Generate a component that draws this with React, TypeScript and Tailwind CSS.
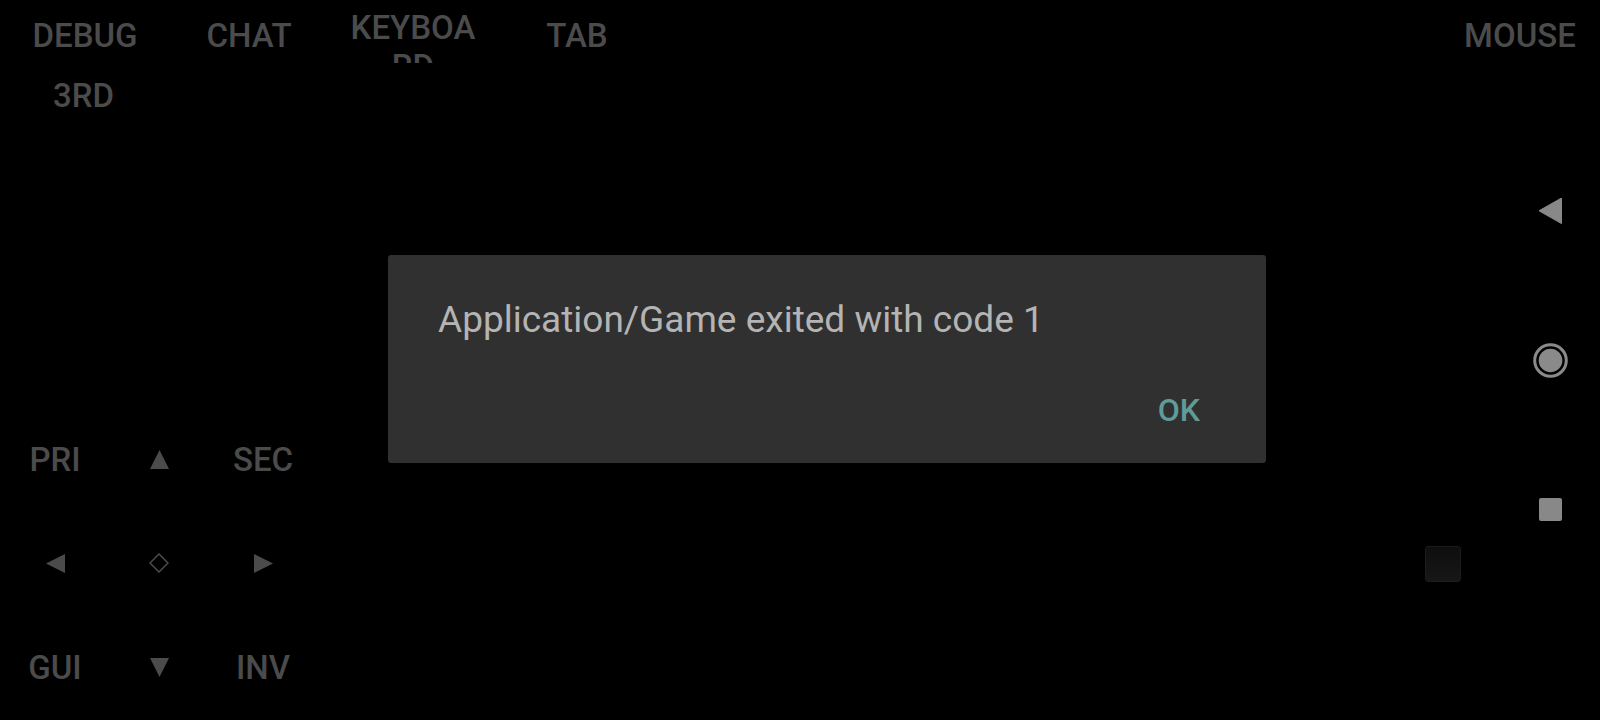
import React from 'react';

const label = 'text-[33px] font-medium text-[#4b4b4b] leading-[39px] whitespace-nowrap';

interface ButtonProps {
  text: string;
  className?: string;
}

// Custom control drawn on the game canvas (top row)
const TopButton: React.FC<ButtonProps> = ({ text, className = 'pt-[16px]' }) => (
  <div className={`w-[130px] h-[63px] overflow-hidden text-center ${className}`}>
    <span className={label}>{text}</span>
  </div>
);

const Arrow: React.FC<{ dir: 'up' | 'down' | 'left' | 'right' }> = ({ dir }) => {
  const points = {
    up: '9.5,0 19,19 0,19',
    down: '0,0 19,0 9.5,19',
    left: '0,9.5 19,0 19,19',
    right: '0,0 19,9.5 0,19',
  }[dir];
  return (
    <svg width="19" height="19" viewBox="0 0 19 19" className="block">
      <polygon points={points} fill="#4b4b4b" />
    </svg>
  );
};

const Cell: React.FC<{ children: React.ReactNode }> = ({ children }) => (
  <div className="flex h-[104px] items-center justify-center">{children}</div>
);

const App: React.FC = () => {
  return (
    <div className="relative h-[720px] w-[1600px] overflow-hidden bg-black font-[Roboto,sans-serif]">
      <div className="flex h-full flex-col">
        {/* top controls */}
        <div className="flex items-start pl-[20px]">
          <div className="flex flex-col">
            <TopButton text="DEBUG" />
            <div className="mt-[13px] w-[130px] pr-[3px] text-center">
              <span className={label}>3RD</span>
            </div>
          </div>
          <div className="ml-[34px]">
            <TopButton text="CHAT" />
          </div>
          <div className="ml-[34px]">
            <div className="h-[63px] w-[130px] overflow-hidden break-all pt-[8px] text-center">
              <span className="text-[33px] font-medium leading-[39px] text-[#4b4b4b]">KEYBOARD</span>
            </div>
          </div>
          <div className="ml-[34px]">
            <TopButton text="TAB" />
          </div>
          <div className="ml-auto mr-[15px]">
            <TopButton text="MOUSE" />
          </div>
        </div>

        {/* bottom controls */}
        <div className="mt-auto flex items-end justify-between">
          <div className="ml-[3px] mb-[1px] grid grid-cols-[104px_104px_104px]">
            <Cell><span className={label}>PRI</span></Cell>
            <Cell><Arrow dir="up" /></Cell>
            <Cell><span className={label}>SEC</span></Cell>
            <Cell><Arrow dir="left" /></Cell>
            <Cell>
              <svg width="20" height="20" viewBox="0 0 20 20" className="block">
                <polygon points="10,1 19,10 10,19 1,10" fill="none" stroke="#4b4b4b" strokeWidth="1.5" />
              </svg>
            </Cell>
            <Cell><Arrow dir="right" /></Cell>
            <Cell><span className={label}>GUI</span></Cell>
            <Cell><Arrow dir="down" /></Cell>
            <Cell><span className={label}>INV</span></Cell>
          </div>
          <div className="mb-[138px] mr-[139px] h-[36px] w-[36px] rounded-[3px] border border-[#1c1c1c] bg-gradient-to-b from-[#0e0e0e] to-[#171717]" />
        </div>
      </div>

      {/* navigation bar overlay */}
      <div className="absolute right-0 top-0 flex h-full w-[100px] flex-col justify-center">
        <div className="flex h-[149px] items-center justify-center">
          <svg width="23" height="26" viewBox="0 0 23 26" className="block">
            <polygon points="0,12.8 22.5,0 22.5,25.6" fill="#888888" strokeLinejoin="round" stroke="#888888" strokeWidth="1" />
          </svg>
        </div>
        <div className="flex h-[149px] items-center justify-center">
          <svg width="35" height="35" viewBox="0 0 35 35" className="block">
            <circle cx="17.5" cy="17.5" r="15.8" fill="none" stroke="#8a8a8a" strokeWidth="3" />
            <circle cx="17.5" cy="17.5" r="11.8" fill="#8a8a8a" />
          </svg>
        </div>
        <div className="flex h-[149px] items-center justify-center">
          <div className="h-[23px] w-[23px] rounded-[2px] bg-[#888888]" />
        </div>
      </div>

      {/* exit dialog */}
      <div className="absolute left-[388px] top-[255px] h-[208px] w-[878px] rounded-[3px] bg-[#303030] px-[50px] pt-[37px]">
        <p className="text-[37px] leading-normal text-[#b4b4b4]">Application/Game exited with code 1</p>
        <div className="mt-[38px] flex justify-end pr-[16px]">
          <span className="text-[32px] font-medium leading-normal text-[#5f9c98]">OK</span>
        </div>
      </div>
    </div>
  );
};

export default App;
